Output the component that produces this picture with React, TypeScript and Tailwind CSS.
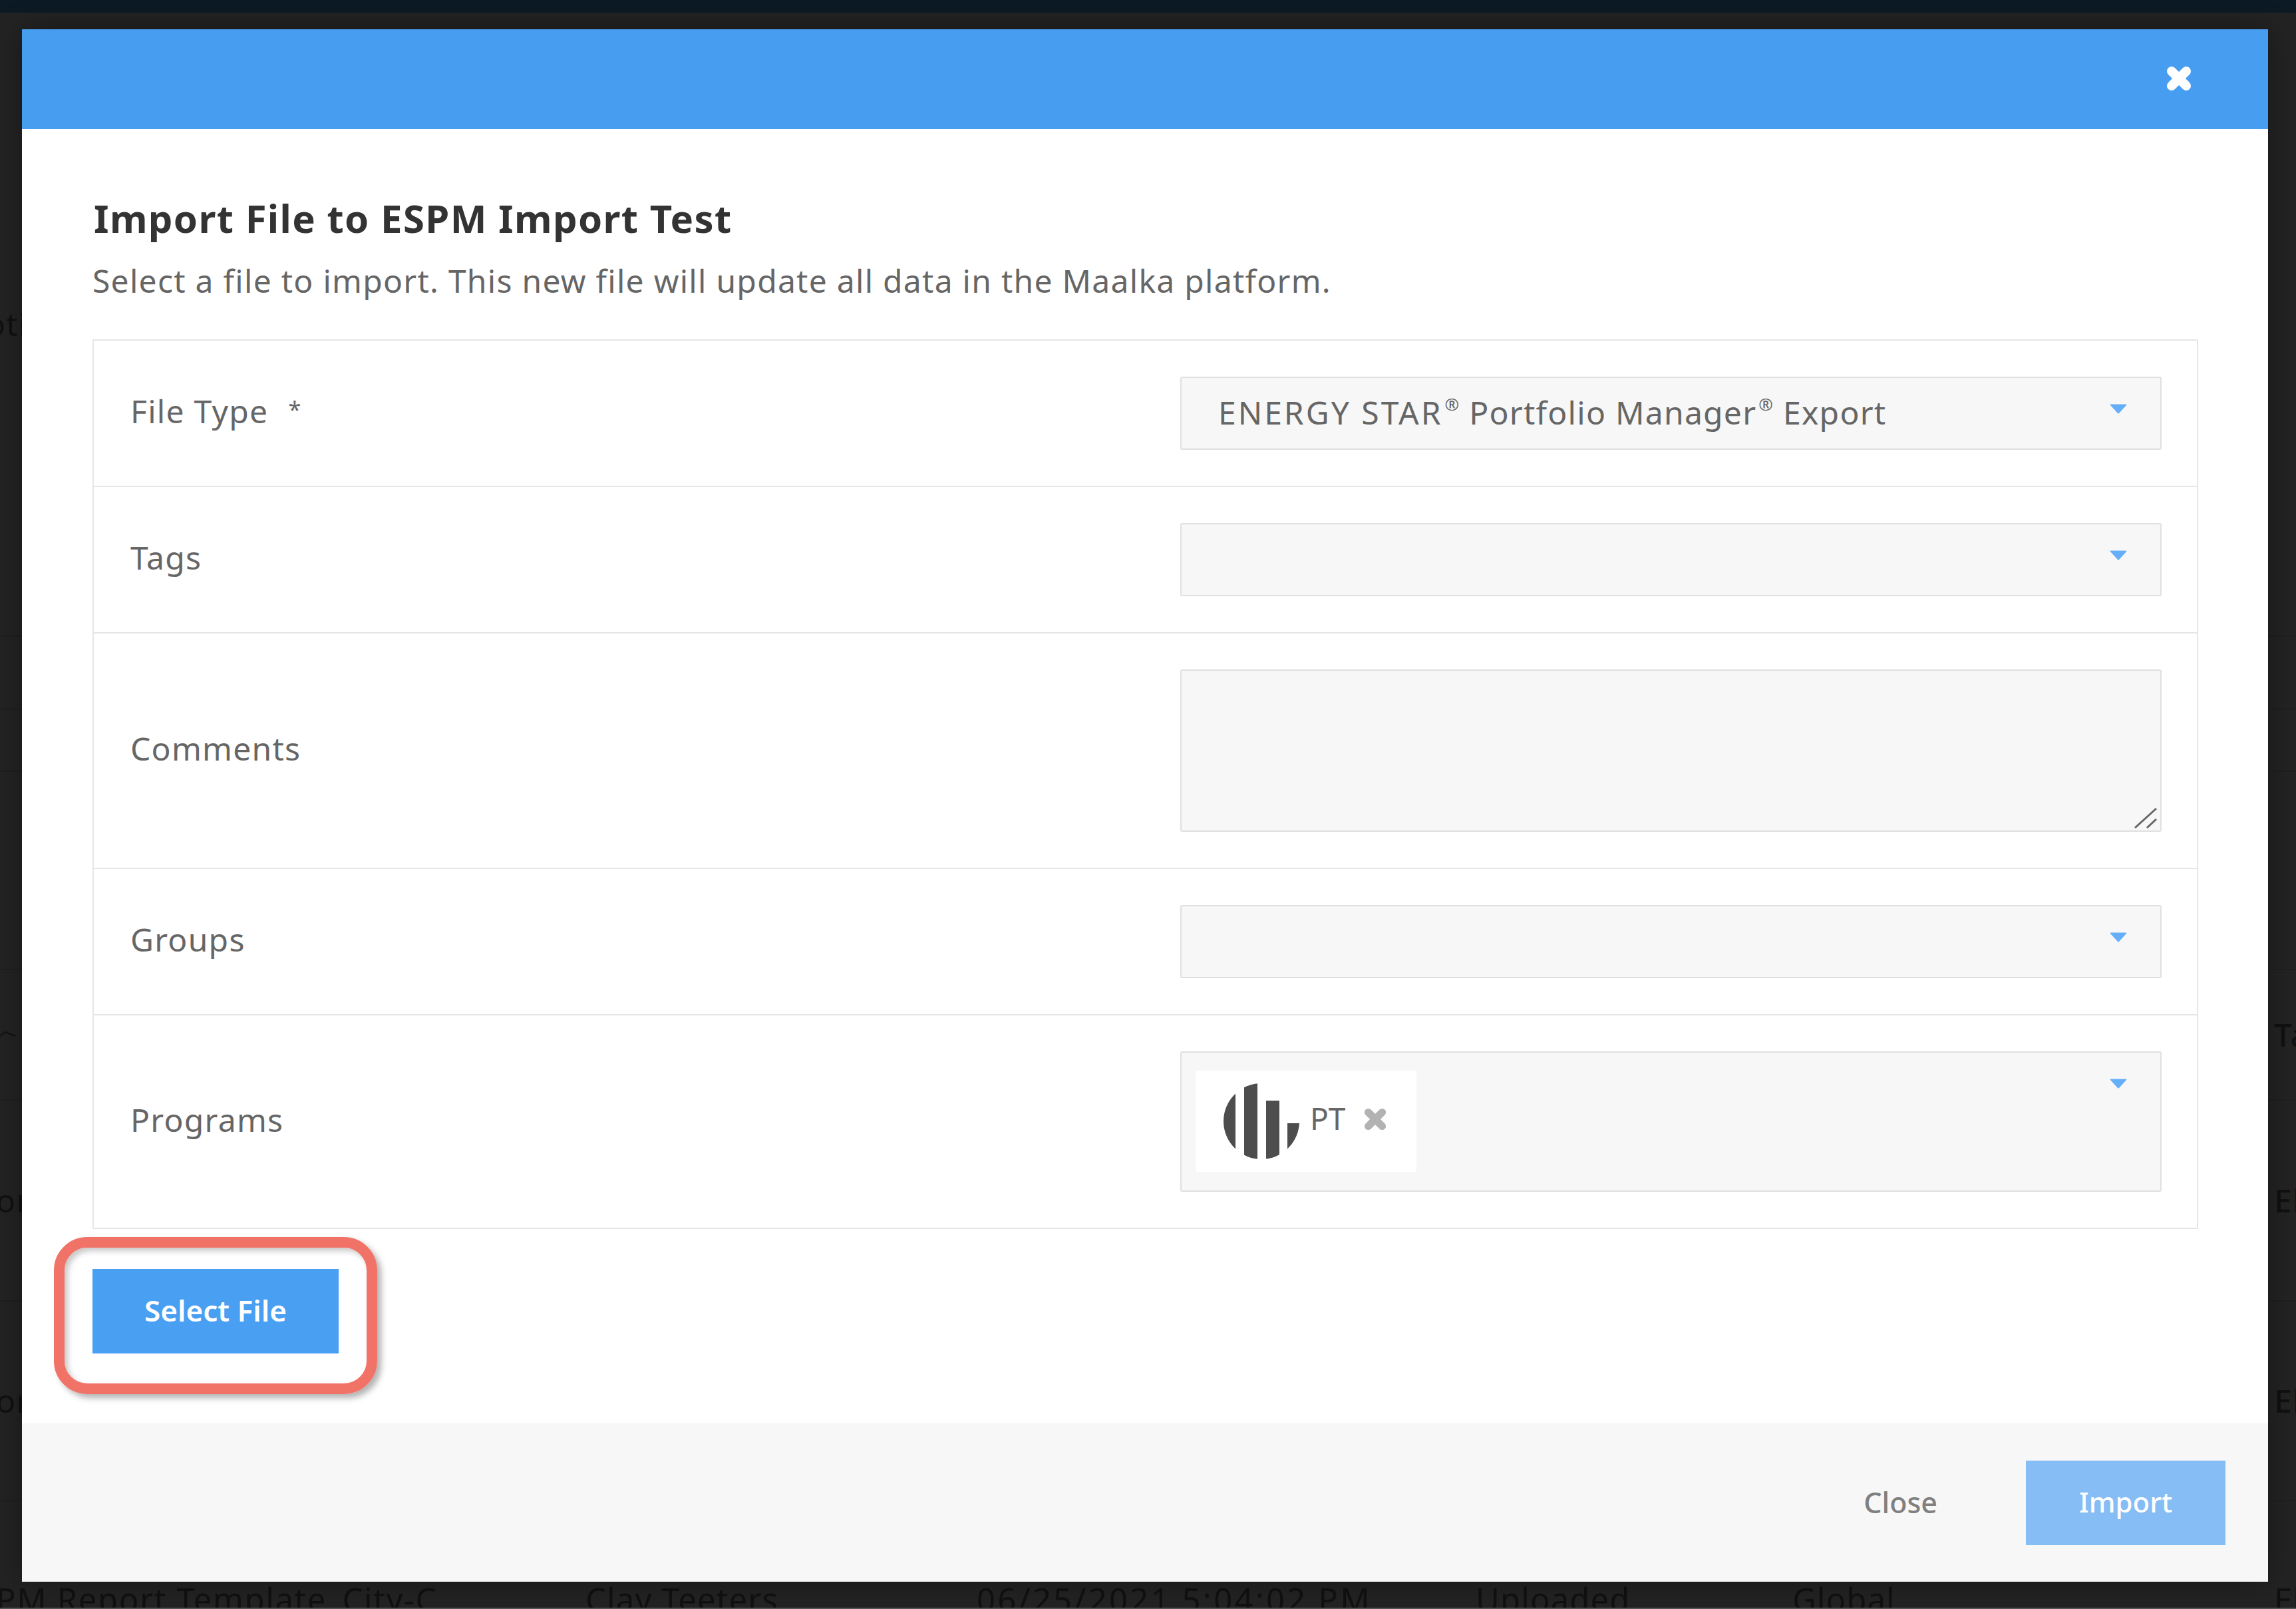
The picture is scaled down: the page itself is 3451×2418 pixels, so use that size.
const tableRows = [
  { height: "h-[938px]", left: "otion", leftClass: "-ml-[21px]", right: "" },
  { height: "h-[110px]", left: "", leftClass: "", right: "" },
  { height: "h-[93px]", left: "", leftClass: "", right: "" },
  { height: "h-[298px]", left: "", leftClass: "", right: "" },
  { height: "h-[196px]", left: "", leftClass: "", right: "Ta" },
  { height: "h-[302px]", left: "or", leftClass: "-ml-[6px]", right: "El" },
  { height: "h-[300px]", left: "or", leftClass: "-ml-[6px]", right: "El" },
];

function PageBehind() {
  return (
    <div className="flex h-full flex-col overflow-hidden text-[48px] leading-none text-[#111111]">
      <div className="h-[19px] shrink-0 bg-[#0c1a26]" />
      {tableRows.map((row, i) => (
        <div
          key={i}
          className={`${row.height} flex shrink-0 items-center justify-between border-b-2 border-[#1f1f1f]`}
        >
          {i === 4 ? (
            <svg width="24" height="10" viewBox="0 0 24 10" className="-mt-[2px]">
              <path d="M-2 9 L8 2 L23 8" fill="none" stroke="#111111" strokeWidth="2" />
            </svg>
          ) : (
            <span className={row.leftClass}>{row.left}</span>
          )}
          <span className="w-[33px] overflow-hidden font-medium whitespace-nowrap">{row.right}</span>
        </div>
      ))}
      <div className="grid h-[294px] shrink-0 grid-cols-[880px_588px_750px_476px_724px_1fr] items-center text-[49px] tracking-[1.1px] whitespace-nowrap">
        <span className="-ml-[6px] tracking-[1.6px]">PM Report Template_City-C</span>
        <span>Clay Teeters</span>
        <span className="tracking-[3.2px]">06/25/2021 5:04:02 PM</span>
        <span>Uploaded</span>
        <span>Global</span>
        <span>El</span>
      </div>
    </div>
  );
}

function Caret() {
  return (
    <svg
      width="26"
      height="15"
      viewBox="0 0 26 15"
      className="absolute top-[39px] right-[50px]"
    >
      <path d="M1.5 0.5 H24.5 Q26 0.5 25 2 L14 14 Q13 15 12 14 L1 2 Q0 0.5 1.5 0.5 Z" fill="#65aef8" />
    </svg>
  );
}

function CrossIcon({ size, weight = 14, className }: { size: number; weight?: number; className?: string }) {
  return (
    <svg width={size} height={size} viewBox="0 0 38 38" className={className}>
      <path
        d="M8 8 L30 30 M30 8 L8 30"
        fill="none"
        stroke="currentColor"
        strokeWidth={weight}
        strokeLinecap="round"
      />
    </svg>
  );
}

function FieldRow({ label, required, children }: { label: string; required?: boolean; children: React.ReactNode }) {
  return (
    <div className="flex items-center justify-between border-b-2 border-[#e6e6e6] py-[54px] pr-[53px] pl-[55px]">
      <span className="-mt-[6px] text-[#666666]">
        {label}
        {required && <span className="ml-[30px] align-[8px] text-[34px]">*</span>}
      </span>
      {children}
    </div>
  );
}

function SelectBox({ children, height = "h-[110px]" }: { children?: React.ReactNode; height?: string }) {
  return (
    <div className={`${height} relative w-[1475px] rounded-[3px] border-2 border-[#e0e0e0] bg-[#f7f7f7]`}>
      {children}
      <Caret />
    </div>
  );
}

function ProgramLogo() {
  return (
    <svg width="116" height="116" viewBox="0 0 116 116">
      <defs>
        <clipPath id="logo-circle">
          <circle cx="58" cy="58" r="57" />
        </clipPath>
      </defs>
      <g clipPath="url(#logo-circle)" fill="#4d4d4d">
        <rect x="0" y="0" width="19" height="116" />
        <rect x="32" y="0" width="20" height="116" />
        <rect x="65" y="27" width="20" height="89" />
        <rect x="97" y="61" width="19" height="55" />
      </g>
    </svg>
  );
}

export default function App() {
  return (
    <div className="relative h-[2418px] w-[3451px] overflow-hidden bg-[#232323] font-['Noto_Sans',sans-serif] text-[48px] tracking-[1.27px]">
      <PageBehind />
      <div className="absolute bottom-0 left-0 h-[2px] w-full bg-[#555555]" />

      {/* modal */}
      <div className="absolute top-[44px] left-[33px] flex h-[2333px] w-[3376px] flex-col bg-white shadow-[0_0_40px_rgba(0,0,0,0.35)]">
        <div className="flex h-[150px] shrink-0 items-center justify-end bg-[#479ef1] pr-[115px] text-white">
          <CrossIcon size={38} className="-mt-[2px]" />
        </div>

        <div className="flex h-[1945px] shrink-0 flex-col pt-[94px] pr-[105px] pl-[106px]">
          <h1 className="ml-[2px] text-[58px] leading-[80px] font-bold tracking-[1.35px] text-[#333333]">
            Import File to ESPM Import Test
          </h1>
          <p className="mt-[19px] leading-[70px] text-[#666666]">
            Select a file to import. This new file will update all data in the Maalka platform.
          </p>

          <div className="mt-[53px] border-x-2 border-t-2 border-[#e6e6e6]">
            <FieldRow label="File Type" required>
              <SelectBox>
                <div className="-mt-[1px] flex h-full items-center pl-[55px] text-[#666666]">
                  <span className="tracking-[3px]">ENERGY STAR</span>
                  <sup className="ml-[3px] text-[26px]">®</sup>&nbsp;Portfolio Manager
                  <sup className="ml-[3px] text-[26px]">®</sup>&nbsp;Export
                </div>
              </SelectBox>
            </FieldRow>
            <FieldRow label="Tags">
              <SelectBox />
            </FieldRow>
            <FieldRow label="Comments">
              <div className="relative h-[244px] w-[1475px] rounded-[3px] border-2 border-[#e0e0e0] bg-[#f7f7f7]">
                <svg width="36" height="34" viewBox="0 0 36 34" className="absolute right-[4px] bottom-[2px]">
                  <path d="M2 32 L34 3 M20 32 L34 19" stroke="#666666" strokeWidth="3" fill="none" />
                </svg>
              </div>
            </FieldRow>
            <FieldRow label="Groups">
              <SelectBox />
            </FieldRow>
            <FieldRow label="Programs">
              <SelectBox height="h-[211px]">
                <div className="mt-[27px] ml-[21px] flex h-[152px] w-[332px] items-center rounded-[3px] bg-white pl-[41px]">
                  <ProgramLogo />
                  <span className="-mt-[9px] ml-[15px] text-[46px] tracking-normal text-[#666666]">PT</span>
                  <CrossIcon size={36} weight={12} className="-mt-[6px] ml-[27px] text-[#b2b2b2]" />
                </div>
              </SelectBox>
            </FieldRow>
          </div>

          <div className="relative mt-[60px] w-[370px]">
            <button className="flex h-[127px] w-full items-center justify-center bg-[#499ff2] pb-[4px] text-[44px] font-semibold tracking-normal text-white">
              Select File
            </button>
            {/* red callout around the button */}
            <div className="pointer-events-none absolute -top-[48px] -right-[58px] -bottom-[61px] -left-[58px] rounded-[50px] border-[16px] border-[#f17367] shadow-[6px_6px_10px_rgba(0,0,0,0.3),inset_5px_5px_9px_rgba(0,0,0,0.22)]" />
          </div>
        </div>

        <div className="flex h-[238px] shrink-0 items-center justify-end bg-[#f7f7f7] pr-[64px]">
          <button className="mr-[133px] text-[43px] font-medium tracking-normal text-[#808080]">Close</button>
          <button className="flex h-[127px] w-[300px] items-center justify-center bg-[#85bdf4] pb-[3px] text-[42px] font-medium tracking-normal text-white">
            Import
          </button>
        </div>
      </div>
    </div>
  );
}
